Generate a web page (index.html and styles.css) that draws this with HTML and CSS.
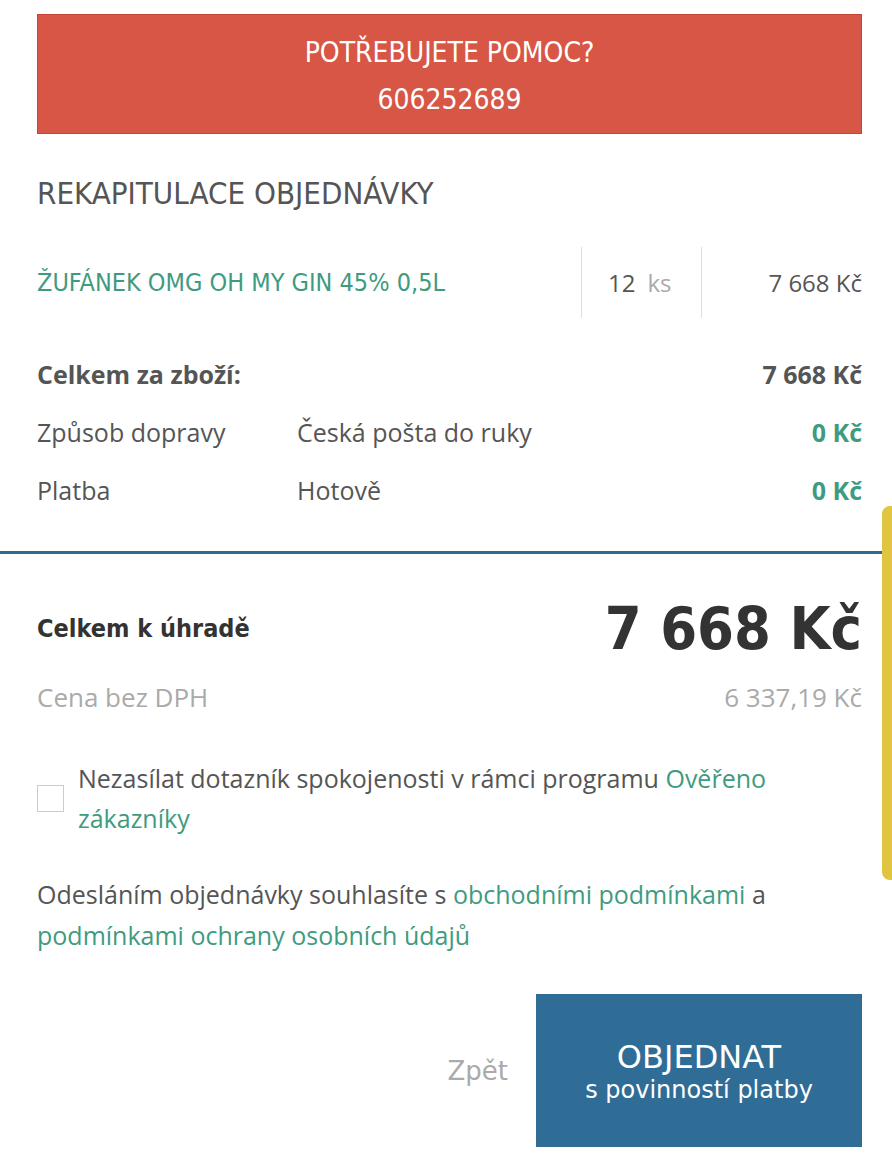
FILE: index.html
```html
<!DOCTYPE html>
<html lang="cs">
<head>
    <meta charset="UTF-8">
    <meta name="viewport" content="width=device-width, initial-scale=1.0">
    <title>Rekapitulace objednávky</title>
    <link rel="stylesheet" href="styles.css">
</head>
<body>

<div class="help-box">
    <div>POTŘEBUJETE POMOC?</div>
    <div>606252689</div>
</div>

<section class="recap">
    <h2>REKAPITULACE OBJEDNÁVKY</h2>

    <div class="item">
        <a class="item-name" href="#">ŽUFÁNEK OMG OH MY GIN 45% 0,5L</a>
        <div class="item-qty">12 <span>ks</span></div>
        <div class="item-price">7 668 Kč</div>
    </div>

    <div class="sum-row total-goods">
        <span class="label">Celkem za zboží:</span>
        <span class="value"></span>
        <span class="price">7 668 Kč</span>
    </div>
    <div class="sum-row">
        <span class="label">Způsob dopravy</span>
        <span class="value">Česká pošta do ruky</span>
        <span class="price green">0 Kč</span>
    </div>
    <div class="sum-row">
        <span class="label">Platba</span>
        <span class="value">Hotově</span>
        <span class="price green">0 Kč</span>
    </div>
</section>

<section class="totals">
    <div class="grand">
        <span class="grand-label">Celkem k úhradě</span>
        <span class="grand-price">7 668 Kč</span>
    </div>
    <div class="netto">
        <span>Cena bez DPH</span>
        <span>6 337,19 Kč</span>
    </div>

    <label class="check">
        <span class="box"></span>
        <span class="check-text">Nezasílat dotazník spokojenosti v rámci programu <a href="#">Ověřeno zákazníky</a></span>
    </label>

    <p class="terms">Odesláním objednávky souhlasíte s <a href="#">obchodními podmínkami</a> a <a href="#">podmínkami ochrany osobních údajů</a></p>

    <div class="actions">
        <a class="back" href="#">Zpět</a>
        <button class="order" type="button">
            <span class="order-main">OBJEDNAT</span>
            <span class="order-sub">s povinností platby</span>
        </button>
    </div>
</section>

<div class="side-tab"></div>

</body>
</html>
```

FILE: styles.css
```css
body {
    font-family: "Open Sans", Arial, sans-serif;
    background-color: #fff;
    margin: 0;
    color: #555;
    position: relative;
    overflow: hidden;
}

a {
    color: #3f9b7f;
    text-decoration: none;
}

.help-box {
    margin: 14px 30px 0 37px;
    height: 120px;
    background-color: #d75645;
    border: 1px solid #c84535;
    color: #fff;
    font-family: "DejaVu Sans Condensed", "DejaVu Sans", sans-serif;
    font-size: 28px;
    line-height: 47px;
    text-align: center;
    padding-top: 14px;
    box-sizing: border-box;
}

.recap {
    margin: 0 30px 0 37px;
    padding-bottom: 32px;
}

.recap h2 {
    font-family: "DejaVu Sans Condensed", "DejaVu Sans", sans-serif;
    font-weight: normal;
    font-size: 31px;
    color: #555;
    margin: 39px 0 34px;
    line-height: 40px;
}

.item {
    display: flex;
    align-items: center;
    height: 71px;
    font-size: 24px;
}

.item-name {
    flex: 1;
    font-family: "DejaVu Sans Condensed", "DejaVu Sans", sans-serif;
    font-size: 25px;
}

.item-qty {
    width: 93px;
    height: 100%;
    display: flex;
    align-items: center;
    padding-left: 26px;
    border-left: 1px solid #ddd;
    border-right: 1px solid #ddd;
}

.item-qty span {
    color: #aaa;
    margin-left: 12px;
}

.item-price {
    flex: 0 0 160px;
    text-align: right;
}

.sum-row {
    display: flex;
    align-items: center;
    height: 58px;
    font-size: 25px;
}

.total-goods {
    margin-top: 27px;
    font-weight: bold;
}

.sum-row .label {
    width: 260px;
}

.sum-row .value {
    flex: 1;
}

.sum-row .price {
    font-weight: bold;
}

.green {
    color: #3f9b7f;
}

.totals {
    border-top: 3px solid #2e6b93;
    margin-right: 10px;
    padding: 33px 20px 30px 37px;
}

.grand {
    display: flex;
    justify-content: space-between;
    align-items: center;
    height: 82px;
}

.grand-label {
    font-family: "DejaVu Sans Condensed", "DejaVu Sans", sans-serif;
    font-weight: bold;
    font-size: 25px;
    color: #333;
}

.grand-price {
    font-family: "DejaVu Sans Condensed", "DejaVu Sans", sans-serif;
    font-weight: bold;
    font-size: 59px;
    color: #333;
}

.netto {
    display: flex;
    justify-content: space-between;
    color: #aaa;
    font-size: 26px;
    margin-top: 10px;
}

.check {
    display: flex;
    align-items: center;
    gap: 14px;
    margin-top: 43px;
    font-size: 25px;
    line-height: 40px;
}

.check .box {
    flex: 0 0 25px;
    height: 25px;
    border: 1px solid #ccc;
}

.check-text {
    flex: 1;
}

.terms {
    font-size: 25px;
    line-height: 41px;
    margin: 36px 0 0;
}

.actions {
    display: flex;
    justify-content: flex-end;
    align-items: center;
    gap: 28px;
    margin-top: 38px;
}

.back {
    color: #aaa;
    font-size: 26px;
    font-family: "DejaVu Sans", sans-serif;
}

.order {
    width: 326px;
    height: 153px;
    border: none;
    background-color: #2f6d96;
    color: #fff;
    display: flex;
    flex-direction: column;
    align-items: center;
    justify-content: center;
    font-family: "DejaVu Sans", sans-serif;
    cursor: pointer;
}

.order-main {
    font-size: 32px;
}

.order-sub {
    font-size: 24px;
}

.side-tab {
    position: absolute;
    top: 506px;
    right: 0;
    width: 10px;
    height: 374px;
    background-color: #e1c440;
    border-radius: 8px 0 0 8px;
}
```
